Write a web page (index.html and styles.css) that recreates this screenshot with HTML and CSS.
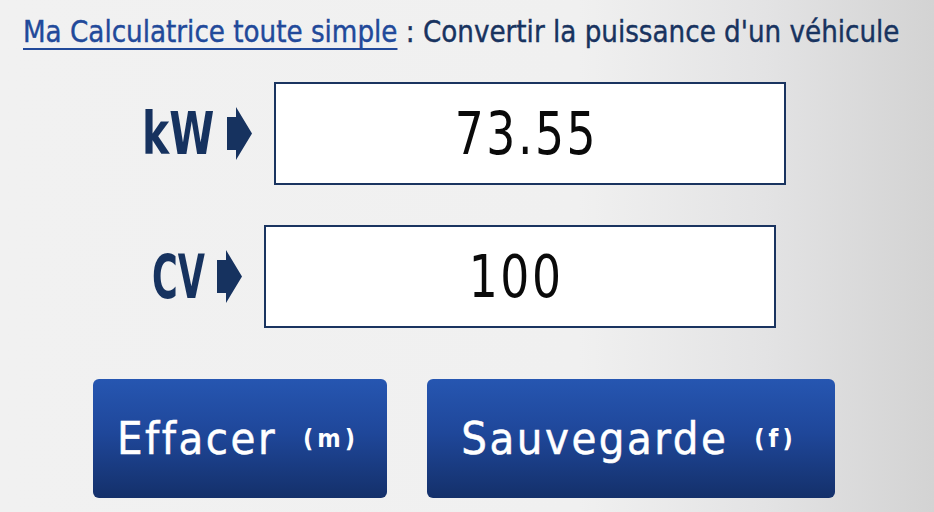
FILE: index.html
```html
<!DOCTYPE html>
<html lang="fr">
<head>
<meta charset="utf-8">
<title>Ma Calculatrice toute simple : Convertir la puissance d'un véhicule</title>
<link rel="stylesheet" href="styles.css">
</head>
<body>
<main class="calc">
  <h1 class="title"><span class="title-text"><a class="title-link" href="#">Ma Calculatrice toute simple</a> : Convertir la puissance d'un véhicule</span></h1>
  <div class="rows">
    <div class="row">
      <span class="unit unit-kw"><span class="unit-text">kW</span></span>
      <svg class="arrow" viewBox="0 0 25 53" width="25" height="53"><path d="M0 10H9V0L25 26.5L9 53V43H0Z"/></svg>
      <div class="field"><span class="field-text">73.55</span></div>
    </div>
    <div class="row">
      <span class="unit unit-cv"><span class="unit-text">CV</span></span>
      <svg class="arrow" viewBox="0 0 25 53" width="25" height="53"><path d="M0 10H9V0L25 26.5L9 53V43H0Z"/></svg>
      <div class="field"><span class="field-text">100</span></div>
    </div>
  </div>
  <div class="buttons">
    <button class="btn btn-clear" type="button">Effacer<span class="key">(m)</span></button>
    <button class="btn btn-save" type="button">Sauvegarde<span class="key">(f)</span></button>
  </div>
</main>
</body>
</html>
```

FILE: styles.css
```css
html, body {
  margin: 0;
  padding: 0;
}
body {
  width: 934px;
  height: 512px;
  overflow: hidden;
  background: linear-gradient(to right, #f1f1f1 0%, #f0f0f0 62%, #e3e3e4 82%, #d3d3d3 100%);
  font-family: "DejaVu Sans Condensed", "DejaVu Sans", sans-serif;
}
.calc {
  display: flex;
  flex-direction: column;
  padding-top: 13px;
}
.title {
  margin: 0 0 0 23px;
  font-size: 31px;
  line-height: 36px;
  font-weight: normal;
  color: #18335f;
  white-space: nowrap;
  -webkit-text-stroke: 0.4px currentColor;
}
.title-text {
  display: inline-block;
  transform: scaleX(0.94);
  transform-origin: left center;
}
.title-link {
  color: #21499a;
  text-decoration: underline;
  text-decoration-thickness: 2px;
  text-underline-offset: 6px;
}
.rows {
  display: flex;
  flex-direction: column;
  gap: 40px;
  margin-top: 33px;
  padding-right: 6px;
}
.row {
  display: flex;
  align-items: center;
  justify-content: center;
  height: 103px;
}
.unit {
  display: block;
  flex: none;
  color: #16325f;
  font-weight: bold;
  line-height: 1;
  white-space: nowrap;
}
.unit-text {
  display: inline-block;
  transform-origin: left center;
}
.unit-kw {
  width: 70px;
  font-size: 59px;
}
.unit-kw .unit-text {
  transform: scaleX(0.77);
}
.unit-cv {
  width: 50px;
  font-size: 61px;
}
.unit-cv .unit-text {
  transform: scaleX(0.64);
}
.arrow {
  fill: #16325f;
  margin-left: 15px;
  margin-right: 22px;
  flex: none;
}
.field {
  box-sizing: border-box;
  width: 512px;
  height: 103px;
  border: 2px solid #1a3460;
  background: #ffffff;
  display: flex;
  align-items: center;
  justify-content: center;
  font-size: 59px;
  letter-spacing: 3px;
  color: #0a0a0a;
  padding-right: 8px;
}
.field-text {
  display: inline-block;
  transform: scaleX(0.86);
}
.buttons {
  display: flex;
  justify-content: center;
  gap: 40px;
  margin-top: 51px;
  padding-right: 6px;
}
.btn {
  height: 119px;
  border: none;
  border-radius: 6px;
  background: linear-gradient(to bottom, #2656b1 0%, #1f479a 45%, #14306a 100%);
  color: #ffffff;
  font-family: inherit;
  font-size: 45px;
  letter-spacing: 2.5px;
  display: flex;
  align-items: center;
  justify-content: center;
  padding: 0 4px 0 0;
  cursor: pointer;
  -webkit-text-stroke: 0.5px currentColor;
}
.btn-clear {
  width: 294px;
}
.btn-save {
  width: 408px;
}
.key {
  font-size: 25px;
  font-weight: bold;
  letter-spacing: 4px;
  margin-left: 26px;
  -webkit-text-stroke: 0;
}
```
